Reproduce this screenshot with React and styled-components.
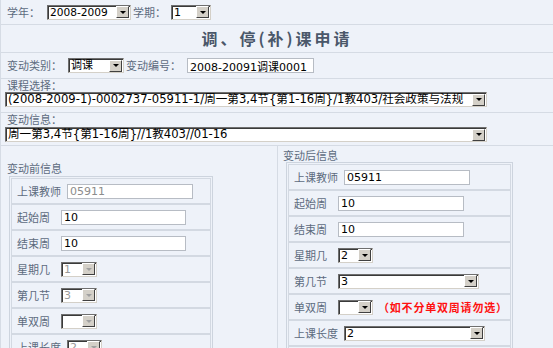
import React from 'react'
import styled, { createGlobalStyle } from 'styled-components'

const GlobalStyle = createGlobalStyle`
  * { box-sizing: border-box; }
  body {
    margin: 0;
    background: #eef2f9;
    font-family: "Noto Sans CJK SC", sans-serif;
  }
`

const Page = styled.div`
  width: 553px;
  background: #eef2f9;
  border-left: 1px solid #d6dce5;
`

const Bar = styled.div`
  display: flex;
  align-items: center;
  height: ${p => p.h}px;
  padding: 0 6px;
  border-bottom: 1px solid #d5dbe4;
`

const Stack = styled.div`
  display: flex;
  flex-direction: column;
  height: ${p => p.h}px;
  padding: ${p => p.top}px 4px 0;
  border-bottom: 1px solid #d5dbe4;
`

const Title = styled.div`
  height: 28px;
  line-height: 27px;
  text-align: center;
  font-size: 16px;
  font-weight: bold;
  letter-spacing: 3px;
  color: #4a5769;
  border-bottom: 1px solid #d5dbe4;
`

const Label = styled.span`
  font-size: 11px;
  line-height: 11px;
  color: #5d6b7e;
  white-space: nowrap;
  margin-right: ${p => (p.gap == null ? 6 : p.gap)}px;
  margin-left: ${p => p.indent || 0}px;
  margin-bottom: ${p => p.below || 0}px;
`

const SelectBox = styled.div`
  display: flex;
  align-items: center;
  flex: none;
  width: ${p => p.w}px;
  height: 15px;
  margin-right: 2px;
  overflow: hidden;
  background: #fff;
  border: 1px solid;
  border-color: #6f6f6f #d4d0c8 #d4d0c8 #6f6f6f;
  box-shadow: inset 1px 1px 0 #3a3a3a;
`

const SelectText = styled.span`
  flex: 1;
  overflow: hidden;
  white-space: nowrap;
  padding-left: 2px;
  font-family: "DejaVu Sans", "Noto Sans CJK SC", sans-serif;
  font-size: ${p => p.size}px;
  line-height: 13px;
  height: 13px;
  color: ${p => (p.off ? '#9a9a9a' : '#000')};
`

const ArrowButton = styled.span`
  flex: none;
  display: flex;
  align-items: center;
  justify-content: center;
  width: 13px;
  height: 12px;
  margin-right: 1px;
  background: #d4d0c8;
  border: 1px solid;
  border-color: #fff #404040 #404040 #fff;

  &::after {
    content: '';
    border-left: 3px solid transparent;
    border-right: 3px solid transparent;
    border-top: 3px solid ${p => (p.off ? '#a0a0a0' : '#000')};
  }
`

const TextBox = styled.input`
  flex: none;
  width: ${p => p.w}px;
  height: 15px;
  padding: 0 2px;
  background: #fff;
  border: 1px solid #b7bcc4;
  font: 11px "DejaVu Sans", "Noto Sans CJK SC", sans-serif;
  color: ${p => (p.muted ? '#8c8c8c' : '#000')};
  outline: none;
`

const Columns = styled.div`
  display: flex;
`

const Column = styled.div`
  width: ${p => p.w}px;
  height: 210px;
  padding: ${p => p.top}px 0 0 ${p => p.left}px;
  border-right: ${p => (p.divider ? '1px solid #d5dbe4' : 'none')};
`

const Heading = styled.div`
  font-size: 11px;
  line-height: 12px;
  color: #5d6b7e;
  margin-bottom: ${p => p.below}px;
`

const Table = styled.div`
  width: ${p => p.w}px;
  margin-left: ${p => p.left}px;
  padding: 1px;
  border: 1px solid #cdd4de;
`

const Row = styled.div`
  display: flex;
  align-items: center;
  height: 26px;
  padding-left: 5px;
  border: 1px solid #d3d9e2;
`

const Note = styled.span`
  margin-left: 3px;
  font-size: 11px;
  font-weight: bold;
  letter-spacing: 0.8px;
  color: #ff1010;
  white-space: nowrap;
`

const Select = ({ w, value, off, size = 11 }) => (
  <SelectBox w={w}>
    <SelectText off={off} size={size}>{value}</SelectText>
    <ArrowButton off={off} />
  </SelectBox>
)

const before = [
  { label: '上课教师', input: '05911', w: 126, muted: true },
  { label: '起始周', input: '10', w: 125 },
  { label: '结束周', input: '10', w: 125 },
  { label: '星期几', select: '1', w: 36 },
  { label: '第几节', select: '3', w: 36 },
  { label: '单双周', select: '', w: 36 },
  { label: '上课长度', select: '2', w: 35 },
]

const after = [
  { label: '上课教师', input: '05911', w: 126 },
  { label: '起始周', input: '10', w: 126 },
  { label: '结束周', input: '10', w: 126 },
  { label: '星期几', select: '2', w: 35 },
  { label: '第几节', select: '3', w: 141 },
  { label: '单双周', select: '', w: 35, note: '（如不分单双周请勿选）' },
  { label: '上课长度', select: '2', w: 141 },
  { label: '上课地点', input: '', w: 126 },
]

const InfoTable = ({ rows, w, left, off }) => (
  <Table w={w} left={left}>
    {rows.map(r => (
      <Row key={r.label}>
        <Label gap={r.label.length > 3 ? 6 : 11}>{r.label}</Label>
        {r.input != null ? (
          <TextBox w={r.w} defaultValue={r.input} muted={r.muted} readOnly />
        ) : (
          <Select w={r.w} value={r.select} off={off} />
        )}
        {r.note && <Note>{r.note}</Note>}
      </Row>
    ))}
  </Table>
)

export default function App() {
  return (
    <Page>
      <GlobalStyle />
      <Bar h={25}>
        <Label gap={7}>学年：</Label>
        <Select w={84} size={10.6} value="2008-2009" />
        <Label gap={5}>学期：</Label>
        <Select w={40} value="1" />
      </Bar>
      <Title>调、停(补)课申请</Title>
      <Bar h={26}>
        <Label>变动类别：</Label>
        <Select w={56} value="调课" />
        <Label>变动编号：</Label>
        <TextBox w={127} defaultValue="2008-20091调课0001" readOnly />
      </Bar>
      <Stack h={34} top={1}>
        <Label indent={2} below={1}>课程选择：</Label>
        <Select w={482} size={11.6} value="(2008-2009-1)-0002737-05911-1/周一第3,4节{第1-16周}/1教403/社会政策与法规" />
      </Stack>
      <Stack h={33} top={1}>
        <Label indent={2} below={2}>变动信息：</Label>
        <Select w={482} size={11.6} value="周一第3,4节{第1-16周}//1教403//01-16" />
      </Stack>
      <Columns>
        <Column w={277} top={16} left={6} divider>
          <Heading below={2}>变动前信息</Heading>
          <InfoTable rows={before} w={204} left={2} off />
        </Column>
        <Column w={275} top={3} left={5}>
          <Heading below={1}>变动后信息</Heading>
          <InfoTable rows={after} w={227} left={3} />
        </Column>
      </Columns>
    </Page>
  )
}
